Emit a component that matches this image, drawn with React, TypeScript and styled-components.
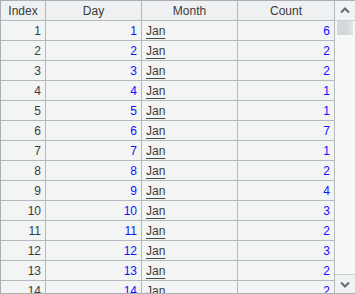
import React from 'react';
import styled, { createGlobalStyle } from 'styled-components';

const GlobalStyle = createGlobalStyle`
  html, body {
    margin: 0;
    padding: 0;
    background: #ffffff;
  }
  body {
    font-family: "Liberation Sans", Arial, sans-serif;
  }
`;

const counts = [6, 2, 2, 1, 1, 7, 1, 2, 4, 3, 2, 3, 2, 2];

const Frame = styled.div`
  width: 355px;
  height: 294px;
  box-sizing: border-box;
  display: flex;
  overflow: hidden;
  background: #b3b9bd;
  border: 1px solid #a9afb3;
  border-right: none;
`;

const Grid = styled.div`
  display: grid;
  grid-template-columns: 44px 95px 95px 96px;
  grid-auto-rows: 19px;
  gap: 1px;
  align-content: start;
  height: 100%;
  overflow: hidden;
  padding-right: 1px;
`;

const HeadCell = styled.div`
  background: #eef0f1;
  color: #3a3a3a;
  font-size: 12px;
  display: flex;
  align-items: center;
  justify-content: center;
`;

const Cell = styled.div<{ $align?: 'left' | 'right'; $blue?: boolean }>`
  background: #f3f4f4;
  color: ${(p) => (p.$blue ? '#1010ff' : '#3a3a3a')};
  font-size: 12px;
  display: flex;
  align-items: center;
  justify-content: ${(p) => (p.$align === 'left' ? 'flex-start' : 'flex-end')};
  padding: ${(p) => (p.$align === 'left' ? '0 0 0 4px' : '0 4px 0 0')};
`;

const LinkText = styled.span`
  color: #3a3a3a;
  text-decoration: underline;
  text-underline-offset: 3px;
  text-decoration-color: #4a4a4a;
`;

const ScrollBar = styled.div`
  width: 20px;
  display: flex;
  flex-direction: column;
  background: #f5f6f7;
  height: 100%;
`;

const ArrowButton = styled.div`
  height: 19px;
  background: #f1f2f3;
  display: flex;
  align-items: center;
  justify-content: center;
  border-bottom: 1px solid #cdd1d4;
`;

const DownButton = styled(ArrowButton)`
  border-bottom: none;
  border-top: 1px solid #cdd1d4;
  height: 18px;
`;

const Track = styled.div`
  flex: 1;
  background: #f7f8f8;
  padding: 0 2px;
`;

const Thumb = styled.div`
  height: 14px;
  background: linear-gradient(to right, #d5d8da 0%, #d5d8da 60%, #e2e4e6 100%);
`;

const Chevron = ({ up }: { up?: boolean }) => (
  <svg width="10" height="7" viewBox="0 0 10 7">
    <path
      d={up ? 'M1 5.5 L5 1.5 L9 5.5' : 'M1 1.5 L5 5.5 L9 1.5'}
      fill="none"
      stroke="#666b70"
      strokeWidth="2"
    />
  </svg>
);

export default function App() {
  return (
    <>
      <GlobalStyle />
      <Frame>
        <Grid>
          <HeadCell>Index</HeadCell>
          <HeadCell>Day</HeadCell>
          <HeadCell>Month</HeadCell>
          <HeadCell>Count</HeadCell>
          {counts.map((c, i) => (
            <React.Fragment key={i}>
              <Cell>{i + 1}</Cell>
              <Cell $blue>{i + 1}</Cell>
              <Cell $align="left">
                <LinkText>Jan</LinkText>
              </Cell>
              <Cell $blue>{c}</Cell>
            </React.Fragment>
          ))}
        </Grid>
        <ScrollBar>
          <ArrowButton>
            <Chevron up />
          </ArrowButton>
          <Track>
            <Thumb />
          </Track>
          <DownButton>
            <Chevron />
          </DownButton>
        </ScrollBar>
      </Frame>
    </>
  );
}
